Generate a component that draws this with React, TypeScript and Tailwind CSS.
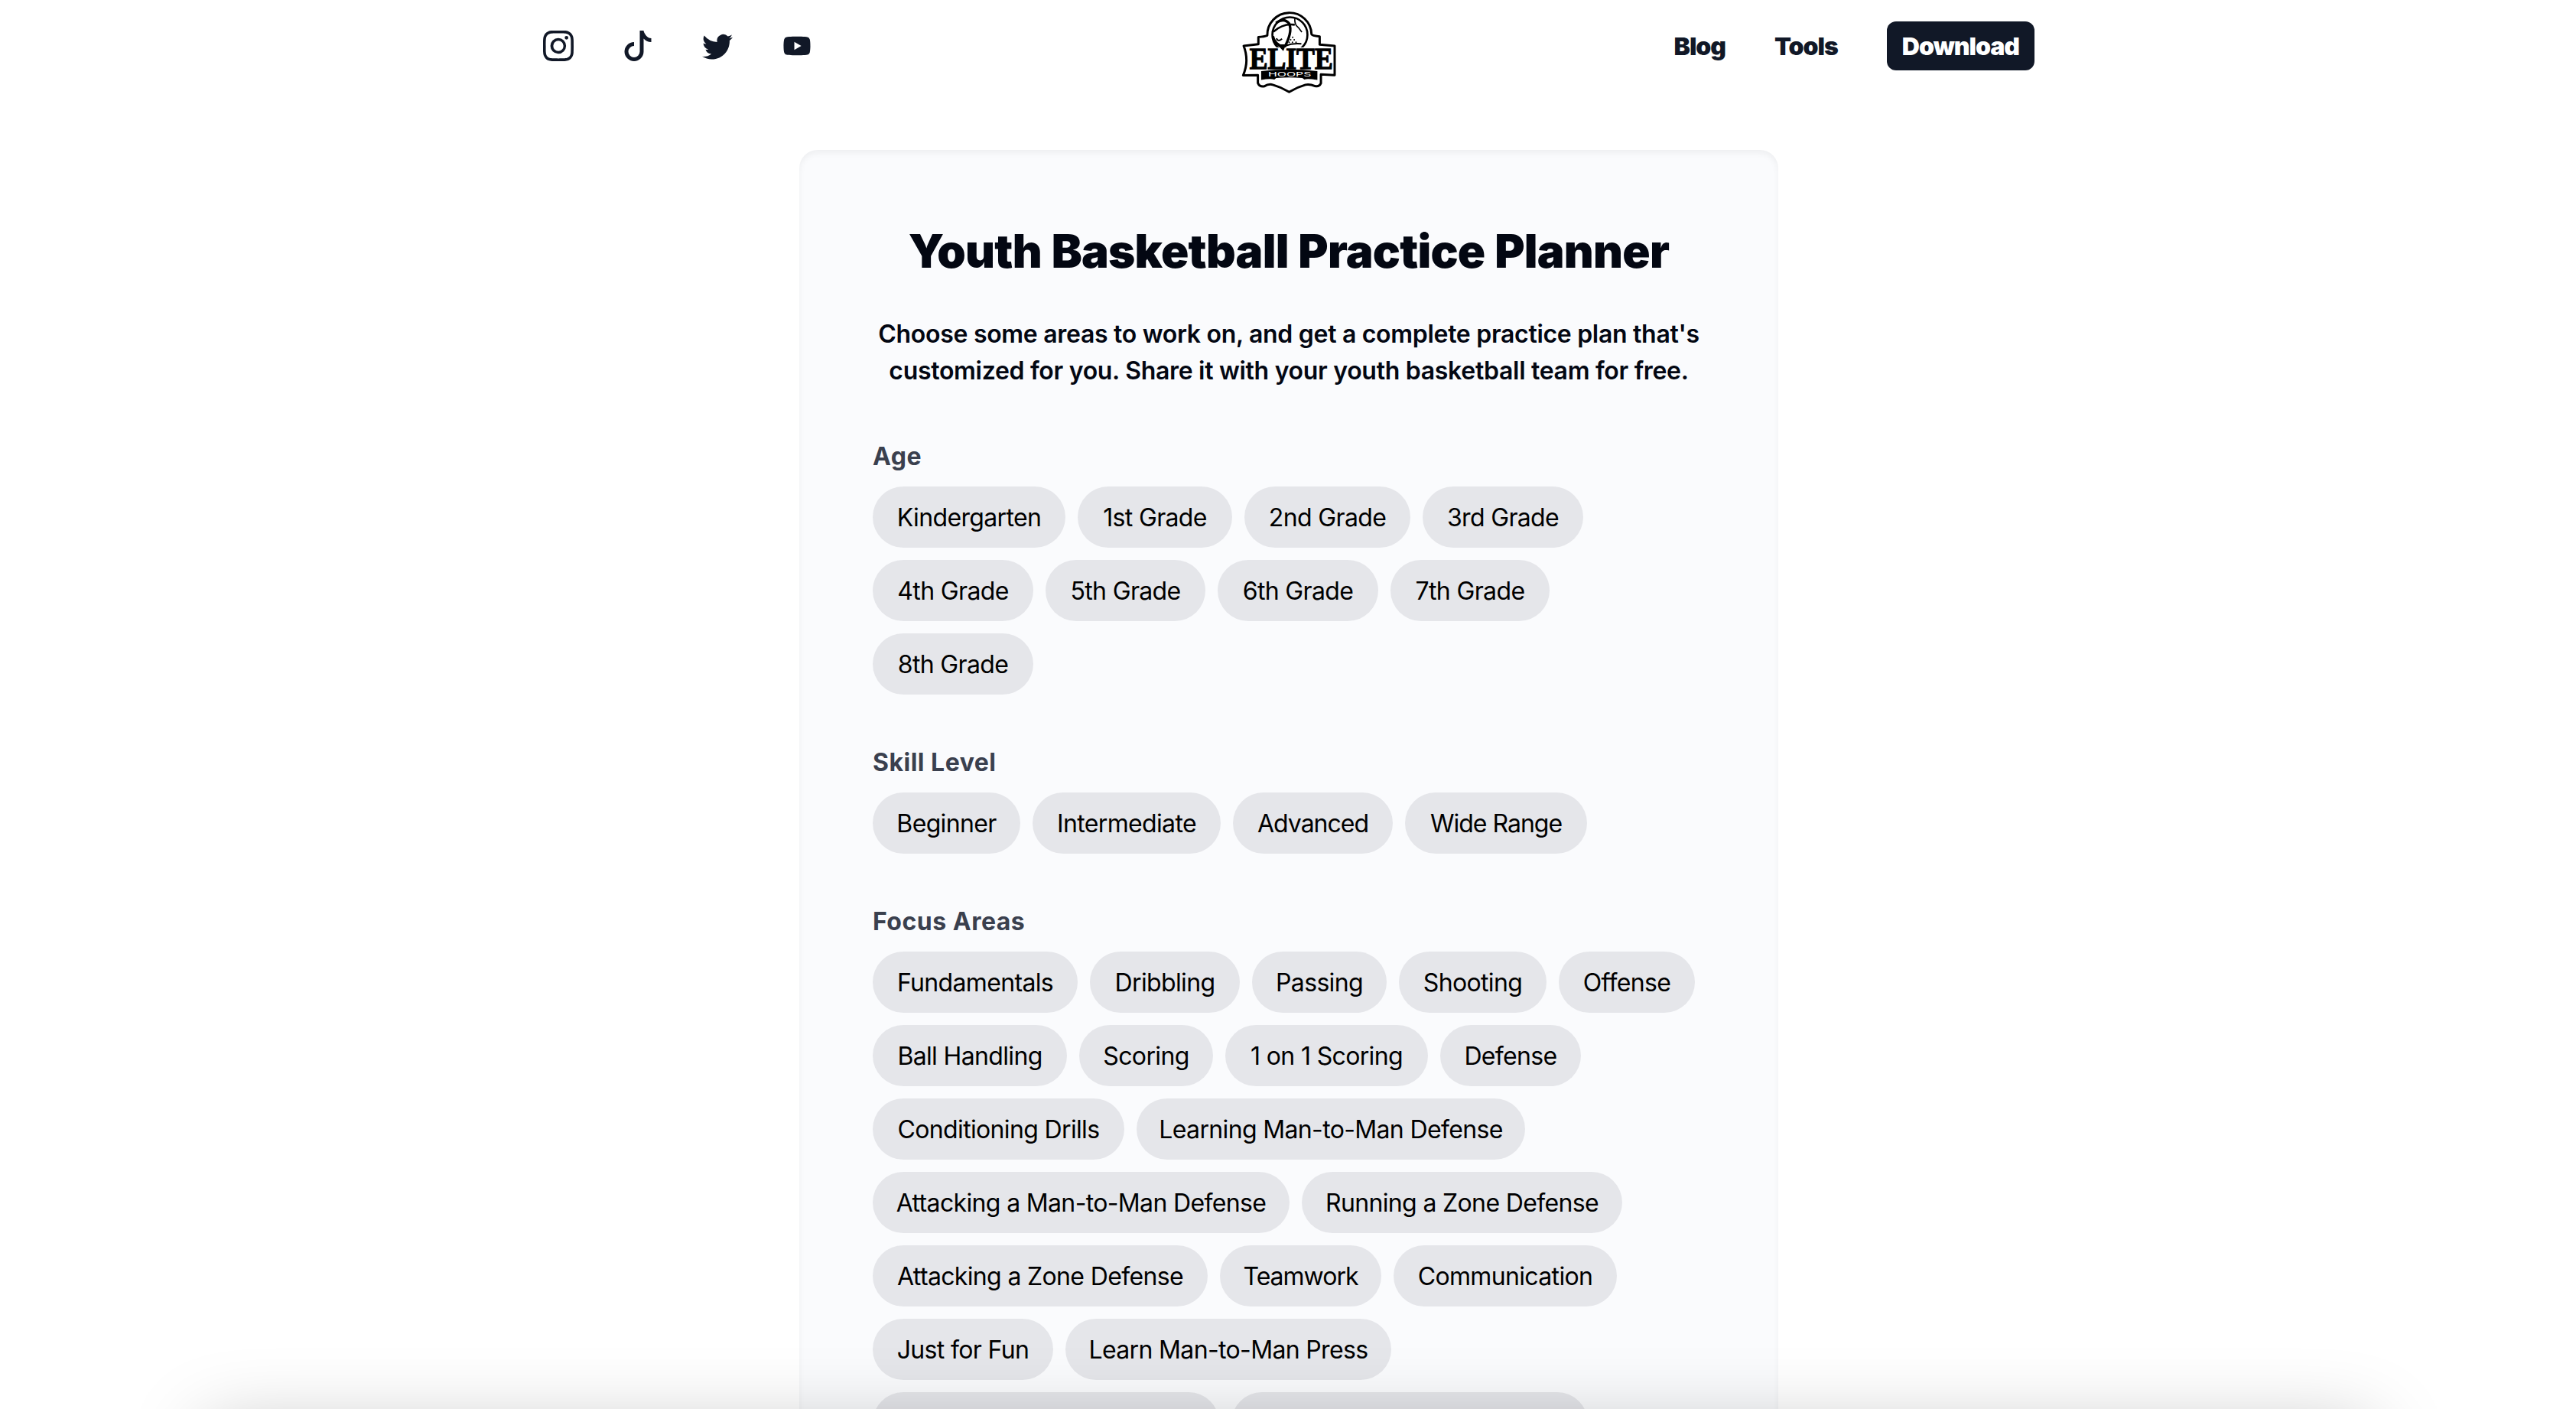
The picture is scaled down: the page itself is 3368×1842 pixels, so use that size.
import { useState } from 'react';
import clsx from 'clsx';
import { BsInstagram, BsTiktok, BsTwitter } from 'react-icons/bs';
import { AiFillYoutube } from 'react-icons/ai';

interface Option {
  label: string;
  width: number;
  tight?: boolean;
}

const AGES: Option[] = [
  { label: 'Kindergarten', width: 252 },
  { label: '1st Grade', width: 202 },
  { label: '2nd Grade', width: 217 },
  { label: '3rd Grade', width: 210 },
  { label: '4th Grade', width: 210 },
  { label: '5th Grade', width: 209 },
  { label: '6th Grade', width: 210 },
  { label: '7th Grade', width: 208 },
  { label: '8th Grade', width: 210 },
];

const SKILL_LEVELS: Option[] = [
  { label: 'Beginner', width: 193 },
  { label: 'Intermediate', width: 246 },
  { label: 'Advanced', width: 209, tight: true },
  { label: 'Wide Range', width: 238, tight: true },
];

const FOCUS_AREAS: Option[] = [
  { label: 'Fundamentals', width: 268 },
  { label: 'Dribbling', width: 196 },
  { label: 'Passing', width: 176 },
  { label: 'Shooting', width: 193 },
  { label: 'Offense', width: 178 },
  { label: 'Ball Handling', width: 254 },
  { label: 'Scoring', width: 175 },
  { label: '1 on 1 Scoring', width: 265 },
  { label: 'Defense', width: 184 },
  { label: 'Conditioning Drills', width: 329 },
  { label: 'Learning Man-to-Man Defense', width: 508 },
  { label: 'Attacking a Man-to-Man Defense', width: 545 },
  { label: 'Running a Zone Defense', width: 419 },
  { label: 'Attacking a Zone Defense', width: 438 },
  { label: 'Teamwork', width: 211, tight: true },
  { label: 'Communication', width: 292 },
  { label: 'Just for Fun', width: 236 },
  { label: 'Learn Man-to-Man Press', width: 426 },
];

interface OptionGroupProps {
  label: string;
  options: Option[];
  children?: React.ReactNode;
}

function OptionGroup({ label, options, children }: OptionGroupProps) {
  const [selected, setSelected] = useState<string[]>([]);

  const toggle = (option: string) => {
    setSelected((prev) =>
      prev.includes(option) ? prev.filter((o) => o !== option) : [...prev, option],
    );
  };

  return (
    <div className="mt-16">
      <h2 className="pt-px text-[32px] leading-[48px] font-bold tracking-[0.5px] text-[#3a404e]">{label}</h2>
      <div className="mt-[15px] flex flex-wrap gap-4">
        {options.map((option) => (
          <button
            key={option.label}
            type="button"
            onClick={() => toggle(option.label)}
            style={{ width: option.width }}
            className={clsx(
              'flex h-20 items-center justify-center rounded-full pt-0.5 text-[32px] leading-[48px] whitespace-nowrap text-black',
              option.tight ? 'tracking-[-1px]' : 'tracking-[-0.65px]',
              selected.includes(option.label) ? 'bg-gray-400' : 'bg-[#e5e6ea]',
            )}
          >
            {option.label}
          </button>
        ))}
        {children}
      </div>
    </div>
  );
}

function Logo() {
  return (
    <svg viewBox="70 40 376 324" className="h-[108px] w-[125px]" fill="none">
      {/* badge outline */}
      <path
        d="M172 137 A86 86 0 0 1 346 132 Q348 138 378 141 V173 L437 178 V293 L383 290 V325 Q376 340 360 336 Q340 328 322 331 Q290 340 258 359 Q226 340 194 331 Q178 326 160 337 Q142 340 135 324 V293 L77 294 Q90 262 90 235 Q90 205 79 178 L137 171 V143 Q160 142 172 137 Z"
        fill="white"
        stroke="black"
        strokeWidth="9"
        strokeLinejoin="round"
      />
      {/* ball */}
      <circle cx="261" cy="134" r="69" fill="white" stroke="black" strokeWidth="8" />
      <path d="M206 88 Q238 66 258 90 Q274 124 234 194" stroke="black" strokeWidth="10" />
      <path d="M196 122 Q236 88 280 95" stroke="black" strokeWidth="8" />
      <path d="M281 68 Q278 84 286 98 Q296 106 308 124" stroke="black" strokeWidth="5" />
      <path d="M194 140 Q200 172 238 184" stroke="black" strokeWidth="10" />
      <path d="M208 148 Q214 164 230 150" stroke="black" strokeWidth="6" />
      <g fill="black">
        <circle cx="272" cy="144" r="3" />
        <circle cx="264" cy="154" r="3" />
        <circle cx="278" cy="154" r="3" />
        <circle cx="258" cy="164" r="3" />
        <circle cx="271" cy="164" r="3" />
        <circle cx="285" cy="164" r="3" />
      </g>
      <path d="M242 178 Q272 166 306 170" stroke="black" strokeWidth="6" />
      <path d="M98 184 H422 V272 H98 Z" fill="white" />
      <path d="M210 172 H246 L235 198 Z" fill="black" />
      {/* wordmark */}
      <text
        x="102"
        y="267"
        textLength="328"
        lengthAdjust="spacingAndGlyphs"
        className="font-['Liberation_Serif',serif] text-[120px] font-bold"
        fill="black"
        stroke="black"
        strokeWidth="4"
      >
        ELITE
      </text>
      {/* ribbon */}
      <path
        d="M148 277 Q258 264 369 277 V312 Q330 306 318 310 L310 304 Q258 300 207 304 L200 310 Q180 306 148 312 Z"
        fill="black"
      />
      <text
        x="175"
        y="299"
        textLength="170"
        lengthAdjust="spacingAndGlyphs"
        className="font-[Inter,sans-serif] text-[24px]"
        fill="white"
      >
        HOOPS
      </text>
    </svg>
  );
}

function Header() {
  return (
    <header className="mx-auto flex h-[120px] w-[1950px] items-center justify-between text-[#111827]">
      <div className="flex flex-1 items-center gap-16 text-[40px]">
        <BsInstagram />
        <BsTiktok />
        <BsTwitter />
        <AiFillYoutube />
      </div>
      <div className="pt-[15px]">
        <Logo />
      </div>
      <nav className="flex flex-1 items-center justify-end gap-16 text-[32px] font-black tracking-[-1px]">
        <a href="#blog" className="pt-0.5">Blog</a>
        <a href="#tools" className="pt-0.5">Tools</a>
        <a href="#download" className="flex h-16 items-center rounded-xl bg-[#111827] px-5 pt-0.5 text-white">
          Download
        </a>
      </nav>
    </header>
  );
}

export default function App() {
  return (
    <div className="h-[1842px] overflow-hidden bg-white pl-[2px] font-[Inter,sans-serif]">
      <Header />
      <main className="mx-auto mt-[76px] w-[1280px] rounded-3xl bg-[#fafbfd] px-24 pt-24 pb-24 shadow-[inset_0_4px_8px_rgba(0,0,0,0.05)]">
        <h1 className="text-center text-[60px] leading-[72px] font-black tracking-[-0.75px] whitespace-nowrap text-gray-950 [word-spacing:1.5px]">
          Youth Basketball Practice Planner
        </h1>
        <p className="mt-[49px] -mb-px text-center text-[32px] leading-[48px] font-semibold tracking-[-0.3px] whitespace-nowrap text-gray-950">
          Choose some areas to work on, and get a complete practice plan that's
          <br />
          customized for you. Share it with your youth basketball team for free.
        </p>
        <OptionGroup label="Age" options={AGES} />
        <OptionGroup label="Skill Level" options={SKILL_LEVELS} />
        <OptionGroup label="Focus Areas" options={FOCUS_AREAS}>
          <span className="h-20 w-[453px] rounded-full bg-[#e5e6ea]" />
          <span className="h-20 w-[466px] rounded-full bg-[#e5e6ea]" />
        </OptionGroup>
      </main>
      {/* shade rising from the bottom edge of the window */}
      <div className="pointer-events-none fixed -bottom-[225px] left-[270px] h-[200px] w-[2830px] shadow-[0_0_100px_rgba(0,0,0,0.25)]" />
    </div>
  );
}
